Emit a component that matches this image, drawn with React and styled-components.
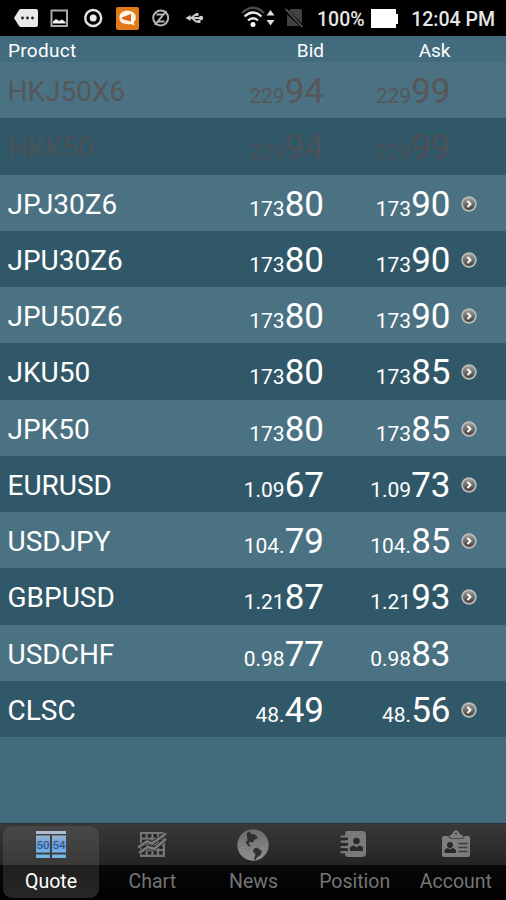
import React from "react";
import styled, { createGlobalStyle } from "styled-components";

const quotes = [
  { name: "HKJ50X6", bid: ["229", "94"], ask: ["229", "99"], off: true },
  { name: "HKK50", bid: ["229", "94"], ask: ["229", "99"], off: true },
  { name: "JPJ30Z6", bid: ["173", "80"], ask: ["173", "90"], arrow: true },
  { name: "JPU30Z6", bid: ["173", "80"], ask: ["173", "90"], arrow: true },
  { name: "JPU50Z6", bid: ["173", "80"], ask: ["173", "90"], arrow: true },
  { name: "JKU50", bid: ["173", "80"], ask: ["173", "85"], arrow: true },
  { name: "JPK50", bid: ["173", "80"], ask: ["173", "85"], arrow: true },
  { name: "EURUSD", bid: ["1.09", "67"], ask: ["1.09", "73"], arrow: true },
  { name: "USDJPY", bid: ["104.", "79"], ask: ["104.", "85"], arrow: true },
  { name: "GBPUSD", bid: ["1.21", "87"], ask: ["1.21", "93"], arrow: true },
  { name: "USDCHF", bid: ["0.98", "77"], ask: ["0.98", "83"] },
  { name: "CLSC", bid: ["48.", "49"], ask: ["48.", "56"], arrow: true },
];

const StatusIcons = () => (
  <StStatusSvg width="316" height="36" viewBox="0 0 316 36">
    {/* message */}
    <path d="M14 18l5-8q1-1 2-1h15q2 0 2 2v14q0 2-2 2H21q-1 0-2-1z" fill="#e9e9e9" />
    <g fill="#222">
      <circle cx="22.5" cy="18" r="1.4" />
      <circle cx="27.5" cy="18" r="1.4" />
      <circle cx="32.5" cy="18" r="1.4" />
    </g>
    {/* picture */}
    <rect x="51.5" y="10.5" width="15.5" height="15.5" fill="none" stroke="#aaa" strokeWidth="2" />
    <path d="M53 23.5v-2l3-2.5 3 2 3-1.5 3.5 2.5v1.5z" fill="#f2f2f2" />
    {/* record */}
    <circle cx="93.2" cy="18" r="8" fill="none" stroke="#e4e4e4" strokeWidth="2.4" />
    <circle cx="93.2" cy="18" r="3.5" fill="#eee" />
    {/* megaphone */}
    <rect x="116" y="7" width="23" height="23" rx="2" fill="#e27b16" />
    <path d="M127.5 10.8c5.3 0 8.3 2.8 8.3 6.7 0 2-.7 3.6-2 4.8l.8 3.2-4-1.5c-6.8 1-11.3-1.9-11.3-6.3 0-4.2 3.2-6.9 8.2-6.9z" fill="#fff1e4" />
    <path d="M122 17.5l9-3.5v7.5l-9-2.5z" fill="#d9621a" />
    {/* sync off */}
    <circle cx="160.7" cy="18" r="7.5" fill="none" stroke="#b5b5b5" strokeWidth="2" />
    <path d="M156.5 14.5h7l-6 7h7M155 25l11.5-14" fill="none" stroke="#b5b5b5" strokeWidth="1.8" />
    {/* usb */}
    <path d="M188 18h14M191 18l4-3h3M192 18l4 3.5h3" fill="none" stroke="#c8c8c8" strokeWidth="1.9" />
    <path d="M185.5 18l5-3v6z" fill="#d0d0d0" />
    <path d="M195.5 13h3v3h-3zM197.5 20h3v3h-3z" fill="#c8c8c8" />
    <circle cx="201" cy="18" r="2.2" fill="#d0d0d0" />
    {/* wifi */}
    <g fill="none" strokeWidth="2.3">
      <path d="M242 13q11-10.5 22 0" stroke="#484848" />
      <path d="M244.5 16.5q8.5-8 17 0" stroke="#e8e8e8" />
      <path d="M248 20.5q5-4.5 10 0" stroke="#e8e8e8" />
    </g>
    <circle cx="253" cy="24.5" r="2.5" fill="#fff" />
    <path d="M266.5 15.5l4-5.5 4 5.5zM266.5 20l4 5.5 4-5.5z" fill="#ddd" />
    {/* no sim */}
    <path d="M287 12l4-3h9q2 0 2 2v15h-15z" fill="#414141" />
    <path d="M285 10l18 17" stroke="#000" strokeWidth="3.5" />
    <path d="M285.5 9l17 18" stroke="#5a5a5a" strokeWidth="1.6" />
  </StStatusSvg>
);

const BatteryIcon = () => (
  <StBattery viewBox="0 0 28 20" width="28" height="20">
    <path d="M0 0h25v5h2v10h-2v4H0z" fill="#fff" />
  </StBattery>
);

const ArrowIcon = () => (
  <svg width="18" height="18" viewBox="0 0 18 18">
    <defs>
      <linearGradient id="arrowFill" x1="0" y1="0" x2="0" y2="1">
        <stop offset="0" stopColor="#a8a59e" />
        <stop offset="1" stopColor="#3b3831" />
      </linearGradient>
    </defs>
    <circle cx="9" cy="9" r="6.9" fill="url(#arrowFill)" stroke="#b9bcba" strokeWidth="1.7" />
    <path d="M7.5 6l3 3-3 3" fill="none" stroke="#fff" strokeWidth="1.9" />
  </svg>
);

const QuoteIcon = () => (
  <svg width="34" height="32" viewBox="0 0 34 32">
    <defs>
      <linearGradient id="quoteFill" x1="0" y1="0" x2="0" y2="1">
        <stop offset="0" stopColor="#9bb4d0" />
        <stop offset=".6" stopColor="#5f9ce0" />
        <stop offset="1" stopColor="#78b8ec" />
      </linearGradient>
    </defs>
    <path d="M2 2h30v3H2z" fill="#aebccd" />
    <path d="M2 6.5h14v17H2zM18 6.5h14v17H18z" fill="url(#quoteFill)" />
    <path d="M2 25.5h14v3.5H2zM18 25.5h14v3.5H18z" fill="#71b6e0" />
    <g fill="#35507a" fontFamily="Roboto, sans-serif" fontSize="11.5" textAnchor="middle">
      <text x="9" y="20">50</text>
      <text x="25" y="20">54</text>
    </g>
  </svg>
);

const ChartIcon = () => (
  <svg width="34" height="32" viewBox="0 0 34 32">
    <rect x="5" y="3" width="25" height="25" fill="#767676" />
    <g fill="#262626">
      {[7, 12.7, 18.4, 24.1].map((x) =>
        [5, 10.7, 16.4, 22.1].map((y) => (
          <rect key={x + "-" + y} x={x} y={y} width="3.6" height="3.6" />
        ))
      )}
    </g>
    <path d="M3 18.5l9-6 5 2 14-10M4 24l9-6 6 2 12-10" fill="none" stroke="#292929" strokeWidth="4" />
    <path d="M3 18.5l9-6 5 2 14-10M4 24l9-6 6 2 12-10" fill="none" stroke="#7c7c7c" strokeWidth="2.5" />
  </svg>
);

const NewsIcon = () => (
  <svg width="34" height="34" viewBox="0 0 34 34">
    <defs>
      <linearGradient id="globeFill" x1="0" y1="0" x2="0" y2="1">
        <stop offset="0" stopColor="#6c6c6c" />
        <stop offset="1" stopColor="#8e8e8e" />
      </linearGradient>
    </defs>
    <circle cx="17" cy="16" r="15.7" fill="url(#globeFill)" />
    <path d="M10.5 4.5L14 2.500l1 2.500 4 .5L22 9l-3 1.500-2.500 3-3-.5-1 2 3 2.500-3.500-.5-2.500-4 2-1.500-.5-3.500z" fill="#303030" />
    <path d="M18 19.500l3-1 2.500 2 2.500 1.500-1.500 4-3 2-3 3.500-.5-1.500 1.500-4.500-2.500-3z" fill="#303030" />
  </svg>
);

const PositionIcon = () => (
  <svg width="34" height="32" viewBox="0 0 34 32">
    <path d="M8 2h16q4 0 4 4v18q0 4-4 4H10q-3 0-3-3V6q0-2 1-4z" fill="#7a7a7a" />
    <g stroke="#2b2b2b" strokeWidth="3">
      <path d="M3 9.7h7M3 15.2h7M3 20.7h7" />
    </g>
    <path d="M3.5 7.5h6M3.5 12.7h6M3.5 18h6M3.5 23.2h6" stroke="#777" strokeWidth="2.2" strokeLinecap="round" />
    <circle cx="18.5" cy="12" r="3.3" fill="#292929" />
    <path d="M12 22v-3.5q2-2 4-2l2.5 2 2.5-2q2 0 4 2V22z" fill="#292929" />
  </svg>
);

const AccountIcon = () => (
  <svg width="34" height="32" viewBox="0 0 34 32">
    <path d="M5 7h5l3-2 2-3q2-1.5 4 0l2 3 3 2h5q2 0 2 2v17q0 2-2 2H5q-2 0-2-2V9q0-2 2-2z" fill="#7d7d7d" />
    <path d="M10 7q0 2.5 3 2.5h9q3 0 3-2.5" fill="none" stroke="#4a4a4a" strokeWidth="1.2" />
    <circle cx="17" cy="4.5" r="1" fill="#333" />
    <circle cx="11" cy="16" r="3" fill="#292929" />
    <path d="M5.5 24v-3q2-2 3.5-2l2 1.5 2-1.5q2 0 4 2v3z" fill="#292929" />
    <path d="M19.5 14.5h9M19.5 18.5h9M19.5 22.5h9" stroke="#3c3c3c" strokeWidth="1.4" />
  </svg>
);

const tabs = [
  { label: "Quote", icon: <QuoteIcon />, active: true },
  { label: "Chart", icon: <ChartIcon /> },
  { label: "News", icon: <NewsIcon /> },
  { label: "Position", icon: <PositionIcon /> },
  { label: "Account", icon: <AccountIcon /> },
];

const Price = ({ value }) => (
  <StPrice>
    <StSmall>{value[0]}</StSmall>
    {value[1]}
  </StPrice>
);

const App = () => {
  return (
    <>
      <GlobalStyle />
      <StPage>
        <StStatusBar>
          <StatusIcons />
          <StPercent>100%</StPercent>
          <BatteryIcon />
          <StClock>12:04 PM</StClock>
        </StStatusBar>
        <StTableHead>
          <StHeadLeft>Product</StHeadLeft>
          <StHeadRight>Bid</StHeadRight>
          <StHeadRight>Ask</StHeadRight>
        </StTableHead>
        <StList>
          {quotes.map((q) => (
            <StRow key={q.name} $off={q.off}>
              <StName>{q.name}</StName>
              <Price value={q.bid} />
              <Price value={q.ask} />
              <StArrow>{q.arrow && <ArrowIcon />}</StArrow>
            </StRow>
          ))}
        </StList>
        <StTabBar>
          {tabs.map((tab) => (
            <StTab key={tab.label} $active={tab.active}>
              <StTabIcon>{tab.icon}</StTabIcon>
              <StTabLabel>{tab.label}</StTabLabel>
            </StTab>
          ))}
        </StTabBar>
      </StPage>
    </>
  );
};

export default App;

const GlobalStyle = createGlobalStyle`
  * {
    box-sizing: border-box;
  }
  body {
    margin: 0;
    background: #000;
    font-family: Roboto, sans-serif;
  }
`;

const StPage = styled.div`
  display: flex;
  flex-direction: column;
  width: 506px;
  height: 900px;
  overflow: hidden;
  background: #436b7e;
  color: #fff;
`;

const StStatusBar = styled.header`
  display: flex;
  flex: none;
  height: 36px;
  background: #000;
  color: #e6e6e6;
  font-size: 19.5px;
  font-weight: 500;
  line-height: 40px;
  white-space: nowrap;
`;

const StStatusSvg = styled.svg`
  flex: none;
`;

const StPercent = styled.div`
  width: 55px;
  padding-left: 1px;
`;

const StBattery = styled.svg`
  flex: none;
  margin-top: 9px;
`;

const StClock = styled.div`
  flex: 1;
  padding-right: 11px;
  text-align: right;
`;

const columns = "198px 126px 126.5px 1fr";

const StTableHead = styled.div`
  display: grid;
  grid-template-columns: ${columns};
  flex: none;
  height: 26px;
  font-size: 19px;
  line-height: 29px;
`;

const StHeadLeft = styled.div`
  padding-left: 8px;
  letter-spacing: 0.3px;
`;

const StHeadRight = styled.div`
  text-align: right;
`;

const StList = styled.main`
  flex: 1;
`;

const StRow = styled.div`
  display: grid;
  grid-template-columns: ${columns};
  height: 56.25px;
  background: #4b7283;
  color: ${(props) => (props.$off ? "#565759" : "#fff")};

  &:nth-child(even) {
    background: #315868;
    color: ${(props) => (props.$off ? "#4c5257" : "#fff")};
  }
`;

const StName = styled.div`
  padding-left: 7.5px;
  font-size: 28px;
  line-height: 60.2px;
`;

const StPrice = styled.div`
  text-align: right;
  font-size: 35px;
  line-height: 60.2px;
  white-space: nowrap;
`;

const StSmall = styled.span`
  font-size: 21px;
`;

const StArrow = styled.div`
  padding: 20px 0 0 9.5px;
  line-height: 0;
`;

const StTabBar = styled.nav`
  display: grid;
  grid-template-columns: repeat(5, 1fr);
  flex: none;
  height: 77px;
  border-top: 1px solid #25323a;
  background: linear-gradient(#393939 0, #242424 41px, #080808 41px, #000 76px);
`;

const StTab = styled.div`
  display: flex;
  flex-direction: column;
  align-items: center;
  height: 72px;
  margin: 2px 2px 0 3px;
  border-radius: 9px;
  color: ${(props) => (props.$active ? "#fff" : "#747474")};
  background: ${(props) =>
    props.$active ? "linear-gradient(#484848 0, #393939 39px, #202020 39px, #262626 72px)" : "none"};
`;

const StTabIcon = styled.div`
  height: 40px;
  padding-top: 3px;
`;

const StTabLabel = styled.div`
  font-size: 19.5px;
  line-height: 32px;
`;
